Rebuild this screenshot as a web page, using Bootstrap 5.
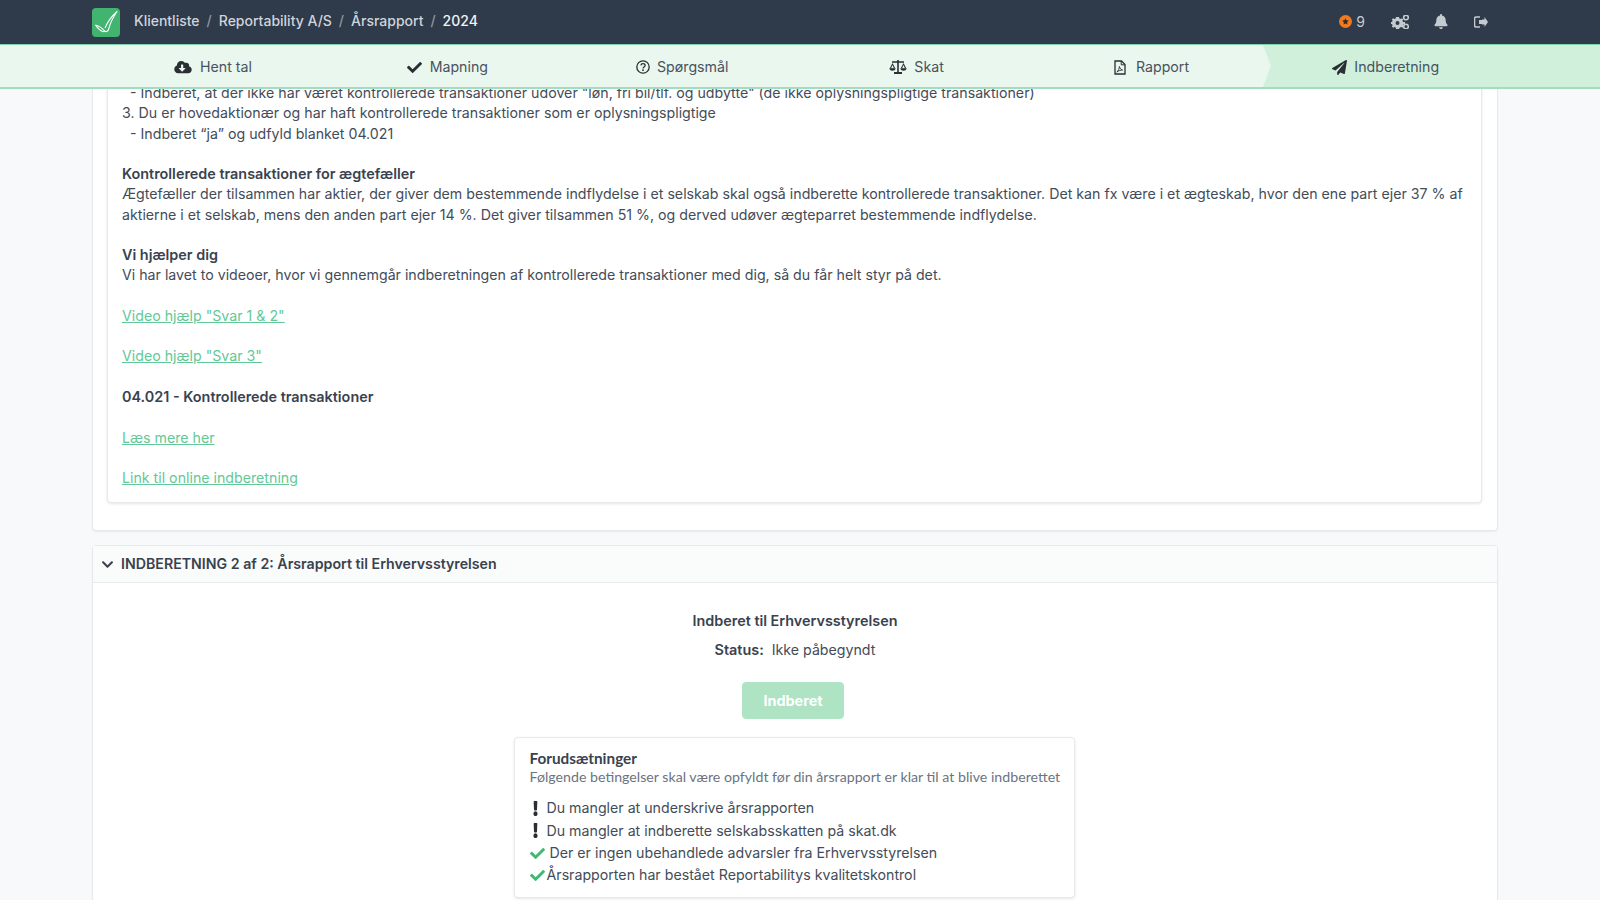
<!DOCTYPE html>
<html lang="da">
<head>
<meta charset="utf-8">
<title>Indberetning</title>
<link href="https://cdn.jsdelivr.net/npm/bootstrap@5.3.0/dist/css/bootstrap.min.css" rel="stylesheet">
<style>
html,body{height:900px;overflow:hidden}
body{background:#f8f9fb;font-family:Inter,"Liberation Sans",sans-serif;font-size:14.2px;line-height:20.27px;color:#434c59}
.topbar{height:44px;background:#2f3a4a;padding:0 112px 0 92px}
.logo-box{width:28px;height:29px;background:#41b46f;border-radius:4px}
.crumbs{--bs-breadcrumb-divider-color:#8d96a3;--bs-breadcrumb-item-active-color:#f1f3f5;--bs-breadcrumb-item-padding-x:7px;margin:0 0 1px 14px;font-size:14px;font-weight:500}
.crumbs a{color:#cfd4da;text-decoration:none}
.top-ico{fill:#c5cad1;display:block}
.top-num{color:#c5cad1;font-size:14px}
.tabbar{height:45px;background:#e9f7ee;border-top:1px solid #7fd3a8;border-bottom:2px solid #a4dcc0;padding-left:96px;color:#49525e}
.tabitem{width:234.4px;font-size:14.2px;gap:7.5px;padding-top:2px}
.tabitem svg{fill:#2b2f33}
.tab-doc{padding-left:2px}
.tab-doc span{margin-left:2px}
.tabitem.current{flex:1;width:auto;margin-left:-5px;padding-right:100px;padding-left:8px;background:#d0f0dc;clip-path:polygon(0 0,100% 0,100% 100%,0 100%,8px 50%)}
.stage{height:811px;overflow:hidden;padding:0 102px 0 92px}
.sheet{background:#fff;border:1px solid #e7e9ec;border-radius:4px;box-shadow:0 1px 2px rgba(0,0,0,.06)}
.sheet-one{margin-top:-38px;padding:15px 15px 27px 14px;margin-bottom:14px}
.inset{border:1px solid #e7e9ec;border-radius:4px;box-shadow:0 1px 3px rgba(0,0,0,.1);padding:15px 14px 14px;background:#fff}
.inset p{margin:0 0 20.27px}
.inset p:last-child{margin:0}
.inset b,.sheet b{font-weight:600;font-size:14.4px;color:#39424f}
.inset a{color:#63c897}
.sheet-head{height:37px;background:#fafbfb;border-bottom:1px solid #e7e9ec;padding:0 8px;font-weight:600;font-size:14.2px;color:#39424f;gap:7px}
.sheet-head svg{fill:#39424f}
.sheet-body{padding-bottom:40px}
.sendbtn{--bs-btn-disabled-bg:#aee3c4;--bs-btn-disabled-border-color:#aee3c4;--bs-btn-disabled-color:#fff;--bs-btn-disabled-opacity:1;width:102px;height:37px;font-weight:700;font-size:14.4px;border-radius:4px;margin-left:-4px;margin-top:22px}
.ttl{font-weight:600;font-size:14.4px;height:20px;margin-top:28px;color:#39424f}
.stat{margin-top:9px;height:20px}
.terms{width:561px;margin:18px 0 0 calc(50% - 281.5px);border:1px solid #e7e9ec;border-radius:4px;box-shadow:0 1px 3px rgba(0,0,0,.1);padding:10px 14px 10px 15px;background:#fff}
.terms-h{font-family:Lato,sans-serif;font-size:15.3px;font-weight:700;line-height:20px;color:#39424f}
.terms-s{font-family:Lato,sans-serif;font-size:14.2px;line-height:18px;color:#6b7480;margin-bottom:11px;white-space:nowrap}
.rule{height:22.3px;line-height:22.3px;gap:5px}
.rule svg{flex:none}
.mk-ex{fill:#2b2f33;margin:0 0 0 3px}
.mk-ok{fill:#3dba72}
</style>
</head>
<body>
<header class="topbar d-flex align-items-center">
  <div class="logo-box d-flex">
    <svg width="28" height="29" viewBox="0 0 28 29" fill="none" stroke="#fff" stroke-width="1.1" stroke-linejoin="round"><path d="M3.500 17c3.500 1 7 3.500 9.500 6.500 1.500.5 3-.5 3.500-2 1.500-6 4.500-12 8.500-18-5 4.500-9.500 10.500-12 16.500"/><path d="M3.500 17c2 3 4.500 5.500 7 6.500 1 .3 2-.2 2.500-1"/></svg>
  </div>
  <nav aria-label="breadcrumb">
    <ol class="breadcrumb crumbs">
      <li class="breadcrumb-item"><a href="#">Klientliste</a></li>
      <li class="breadcrumb-item"><a href="#">Reportability A/S</a></li>
      <li class="breadcrumb-item"><a href="#">Årsrapport</a></li>
      <li class="breadcrumb-item active">2024</li>
    </ol>
  </nav>
  <div class="ms-auto d-flex align-items-center">
    <svg width="13" height="13" viewBox="0 0 13 13"><circle cx="6.500" cy="6.500" r="6.500" fill="#ee7a22"/><path d="M6.500 3.200l1 2.100 2.300.3-1.700 1.600.4 2.300-2-1.100-2 1.100.4-2.300-1.700-1.600 2.300-.3z" fill="#3a2a20"/></svg>
    <span class="top-num ms-1">9</span>
    <svg class="top-ico" style="margin-left:26px" width="18" height="14" viewBox="0 0 18 14"><path d="M5 2h3l.4 1.400 1.400.6 1.200-.7 1.200 1.200-.7 1.300.5 1.200H14v2h-1.500l-.5 1.200.7 1.300-1.200 1.200-1.200-.7-1.400.6L8 14H5l-.3-1.400-1.400-.6-1.200.7-1.200-1.200.7-1.300L1 9H0V7h1l.6-1.200-.7-1.300 1.200-1.200 1.200.7 1.400-.6zM6.500 6a2 2 0 100 4 2 2 0 000-4z"/><circle cx="15" cy="2.500" r="2.300" fill="none" stroke="#c5cad1" stroke-width="1.600"/><circle cx="15" cy="11.500" r="2.300" fill="none" stroke="#c5cad1" stroke-width="1.600"/></svg>
    <svg class="top-ico" style="margin-left:25px" width="14" height="15" viewBox="0 0 448 512"><path d="M224 512c35.320 0 63.970-28.650 63.970-64H160.030c0 35.350 28.650 64 63.970 64zm215.390-149.710c-19.320-20.760-55.470-51.990-55.470-154.290 0-77.700-54.480-139.900-127.940-155.160V32c0-17.670-14.320-32-31.980-32s-31.980 14.330-31.980 32v20.840C118.560 68.100 64.080 130.300 64.080 208c0 102.300-36.150 133.530-55.470 154.290-6 6.450-8.660 14.160-8.610 21.710.11 16.400 12.980 32 32.100 32h383.800c19.120 0 32-15.600 32.100-32 .05-7.550-2.610-15.270-8.610-21.710z"/></svg>
    <svg class="top-ico" style="margin-left:26px" width="14" height="12" viewBox="0 0 14 12"><path d="M8 1v2.500h2.500V1L14 6l-3.500 5V8.500H8z"/><path d="M6 1H2a1.500 1.500 0 00-1.500 1.500v7A1.500 1.500 0 002 11h4" fill="none" stroke="#c5cad1" stroke-width="1.600"/><path d="M5 4h5v4H5z"/></svg>
  </div>
</header>
<nav class="tabbar d-flex">
  <div class="tabitem d-flex align-items-center justify-content-center">
    <svg width="18" height="14" viewBox="0 0 640 512"><path d="M537.600 226.600c4.100-10.700 6.400-22.400 6.400-34.600 0-53-43-96-96-96-19.700 0-38.100 6-53.300 16.200C367 64.200 315.300 32 256 32c-88.400 0-160 71.600-160 160 0 2.700.1 5.400.2 8.100C40.200 219.800 0 273.200 0 336c0 79.500 64.500 144 144 144h368c70.700 0 128-57.300 128-128 0-61.900-44-113.600-102.400-125.400zm-132.900 88.700L299.300 420.700c-6.200 6.200-16.400 6.200-22.600 0L171.300 315.300c-10.100-10.100-2.900-27.300 11.300-27.300H248V176c0-8.800 7.200-16 16-16h48c8.800 0 16 7.200 16 16v112h65.400c14.200 0 21.400 17.200 11.300 27.300z"/></svg>
    <span>Hent tal</span>
  </div>
  <div class="tabitem d-flex align-items-center justify-content-center">
    <svg width="15" height="15" viewBox="0 0 512 512"><path d="M173.898 439.404l-166.400-166.400c-9.997-9.997-9.997-26.206 0-36.204l36.203-36.204c9.997-9.998 26.207-9.998 36.204 0L192 312.690 432.095 72.596c9.997-9.997 26.207-9.997 36.204 0l36.203 36.204c9.997 9.997 9.997 26.206 0 36.204l-294.400 294.401c-9.998 9.997-26.207 9.997-36.204-.001z"/></svg>
    <span>Mapning</span>
  </div>
  <div class="tabitem d-flex align-items-center justify-content-center">
    <svg width="14" height="14" viewBox="0 0 14 14"><circle cx="7" cy="7" r="6.200" fill="none" stroke="#2b2f33" stroke-width="1.300"/><path d="M4.900 5.400C5 4.200 5.900 3.600 7 3.600c1.200 0 2.100.7 2.100 1.800 0 1.600-2.100 1.500-2.100 3" fill="none" stroke="#2b2f33" stroke-width="1.300"/><circle cx="7" cy="10.200" r=".9"/></svg>
    <span>Spørgsmål</span>
  </div>
  <div class="tabitem d-flex align-items-center justify-content-center">
    <svg width="18" height="14" viewBox="0 0 18 14"><path d="M8.200 0h1.600v1.300H15v1.400h-5.200V12H13v2H5v-2h3.200V2.700H3V1.300h5.200z"/><path d="M3.500 3L.8 8.300h5.400zM3.500 5l-1.300 3h2.600zM14.500 3l-2.700 5.300h5.400zM14.500 5l-1.300 3h2.600z" fill-rule="evenodd"/><path d="M.3 8.300h6.400C6.500 10 5 10.800 3.500 10.800S.5 10 .3 8.300zM11.300 8.300h6.400c-.2 1.700-1.700 2.500-3.200 2.500s-3-.8-3.200-2.500z"/></svg>
    <span>Skat</span>
  </div>
  <div class="tabitem tab-doc d-flex align-items-center justify-content-center">
    <svg width="12" height="15" viewBox="0 0 12 15"><path d="M1 1h6.500L11 4.500V14H1z" fill="none" stroke="#2b2f33" stroke-width="1.300"/><path d="M7.200 1v3.800H11" fill="none" stroke="#2b2f33" stroke-width="1"/><path d="M2.800 12c1.500-1 2.500-3.500 2.600-5.500.6 2 1.400 3 3.200 3.500-1.800 0-3.800.6-5.800 2z" fill="none" stroke="#2b2f33" stroke-width=".9"/></svg>
    <span>Rapport</span>
  </div>
  <div class="tabitem current d-flex align-items-center justify-content-center">
    <svg width="15" height="15" viewBox="0 0 512 512"><path d="M476 3.200L12.500 270.600c-18.100 10.400-15.800 35.600 2.200 43.200L121 358.400l287.300-253.200c5.500-4.900 13.300 2.600 8.600 8.300L176 407v80.500c0 23.600 28.500 32.900 42.500 15.800L282 426l124.600 52.200c14.200 6 30.400-2.900 33-18.200l72-432C515 7.800 493.300-6.800 476 3.200z"/></svg>
    <span>Indberetning</span>
  </div>
</nav>
<main class="stage">
  <section class="sheet sheet-one">
    <div class="inset">
      <p>&nbsp;&nbsp;- Indberet, at der ikke har været kontrollerede transaktioner udover "løn, fri bil/tlf. og udbytte" (de ikke oplysningspligtige transaktioner)<br>3. Du er hovedaktionær og har haft kontrollerede transaktioner som er oplysningspligtige<br>&nbsp;&nbsp;- Indberet “ja” og udfyld blanket 04.021</p>
      <p><b>Kontrollerede transaktioner for ægtefæller</b><br>Ægtefæller der tilsammen har aktier, der giver dem bestemmende indflydelse i et selskab skal også indberette kontrollerede transaktioner. Det kan fx være i et ægteskab, hvor den ene part ejer 37 % af aktierne i et selskab, mens den anden part ejer 14 %. Det giver tilsammen 51 %, og derved udøver ægteparret bestemmende indflydelse.</p>
      <p><b>Vi hjælper dig</b><br>Vi har lavet to videoer, hvor vi gennemgår indberetningen af kontrollerede transaktioner med dig, så du får helt styr på det.</p>
      <p><a href="#">Video hjælp "Svar 1 &amp; 2"</a></p>
      <p><a href="#">Video hjælp "Svar 3"</a></p>
      <p><b>04.021 - Kontrollerede transaktioner</b></p>
      <p><a href="#">Læs mere her</a></p>
      <p><a href="#">Link til online indberetning</a></p>
    </div>
  </section>
  <section class="sheet">
    <div class="sheet-head d-flex align-items-center">
      <svg width="13" height="13" viewBox="0 0 448 512"><path d="M207.029 381.476L12.686 187.132c-9.373-9.373-9.373-24.569 0-33.941l22.667-22.667c9.357-9.357 24.522-9.375 33.901-.04L224 284.505l154.745-154.021c9.379-9.335 24.544-9.317 33.901.04l22.667 22.667c9.373 9.373 9.373 24.569 0 33.941L240.971 381.476c-9.373 9.372-24.569 9.372-33.942 0z"/></svg>
      <span>INDBERETNING 2 af 2: Årsrapport til Erhvervsstyrelsen</span>
    </div>
    <div class="sheet-body text-center">
      <div class="ttl">Indberet til Erhvervsstyrelsen</div>
      <div class="stat"><b class="me-1">Status:</b> Ikke påbegyndt</div>
      <button class="btn btn-success sendbtn" disabled>Indberet</button>
      <div class="terms text-start">
        <div class="terms-h">Forudsætninger</div>
        <div class="terms-s">Følgende betingelser skal være opfyldt før din årsrapport er klar til at blive indberettet</div>
        <div class="rule d-flex align-items-center"><svg class="mk-ex" width="5" height="15" viewBox="0 0 192 512" preserveAspectRatio="none"><path d="M176 432c0 44.112-35.888 80-80 80s-80-35.888-80-80 35.888-80 80-80 80 35.888 80 80zM25.260 25.199l13.600 272C39.499 309.972 50.041 320 62.830 320h66.340c12.789 0 23.331-10.028 23.970-22.801l13.600-272C167.425 11.490 156.496 0 142.770 0H49.230C35.504 0 24.575 11.490 25.260 25.199z"/></svg><span class="ms-1">Du mangler at underskrive årsrapporten</span></div>
        <div class="rule d-flex align-items-center"><svg class="mk-ex" width="5" height="15" viewBox="0 0 192 512" preserveAspectRatio="none"><path d="M176 432c0 44.112-35.888 80-80 80s-80-35.888-80-80 35.888-80 80-80 80 35.888 80 80zM25.260 25.199l13.600 272C39.499 309.972 50.041 320 62.830 320h66.340c12.789 0 23.331-10.028 23.970-22.801l13.600-272C167.425 11.490 156.496 0 142.770 0H49.230C35.504 0 24.575 11.490 25.260 25.199z"/></svg><span class="ms-1">Du mangler at indberette selskabsskatten på skat.dk</span></div>
        <div class="rule d-flex align-items-center"><svg class="mk-ok" width="15" height="15" viewBox="0 0 512 512"><path d="M173.898 439.404l-166.400-166.400c-9.997-9.997-9.997-26.206 0-36.204l36.203-36.204c9.997-9.998 26.207-9.998 36.204 0L192 312.690 432.095 72.596c9.997-9.997 26.207-9.997 36.204 0l36.203 36.204c9.997 9.997 9.997 26.206 0 36.204l-294.400 294.401c-9.998 9.997-26.207 9.997-36.204-.001z"/></svg><span>Der er ingen ubehandlede advarsler fra Erhvervsstyrelsen</span></div>
        <div class="rule d-flex align-items-center"><svg class="mk-ok" width="15" height="15" viewBox="0 0 512 512"><path d="M173.898 439.404l-166.400-166.400c-9.997-9.997-9.997-26.206 0-36.204l36.203-36.204c9.997-9.998 26.207-9.998 36.204 0L192 312.690 432.095 72.596c9.997-9.997 26.207-9.997 36.204 0l36.203 36.204c9.997 9.997 9.997 26.206 0 36.204l-294.400 294.401c-9.998 9.997-26.207 9.997-36.204-.001z"/></svg><span style="margin-left:-3px">Årsrapporten har bestået Reportabilitys kvalitetskontrol</span></div>
      </div>
    </div>
  </section>
</main>
<script src="https://cdn.jsdelivr.net/npm/bootstrap@5.3.0/dist/js/bootstrap.bundle.min.js"></script>
</body>
</html>
